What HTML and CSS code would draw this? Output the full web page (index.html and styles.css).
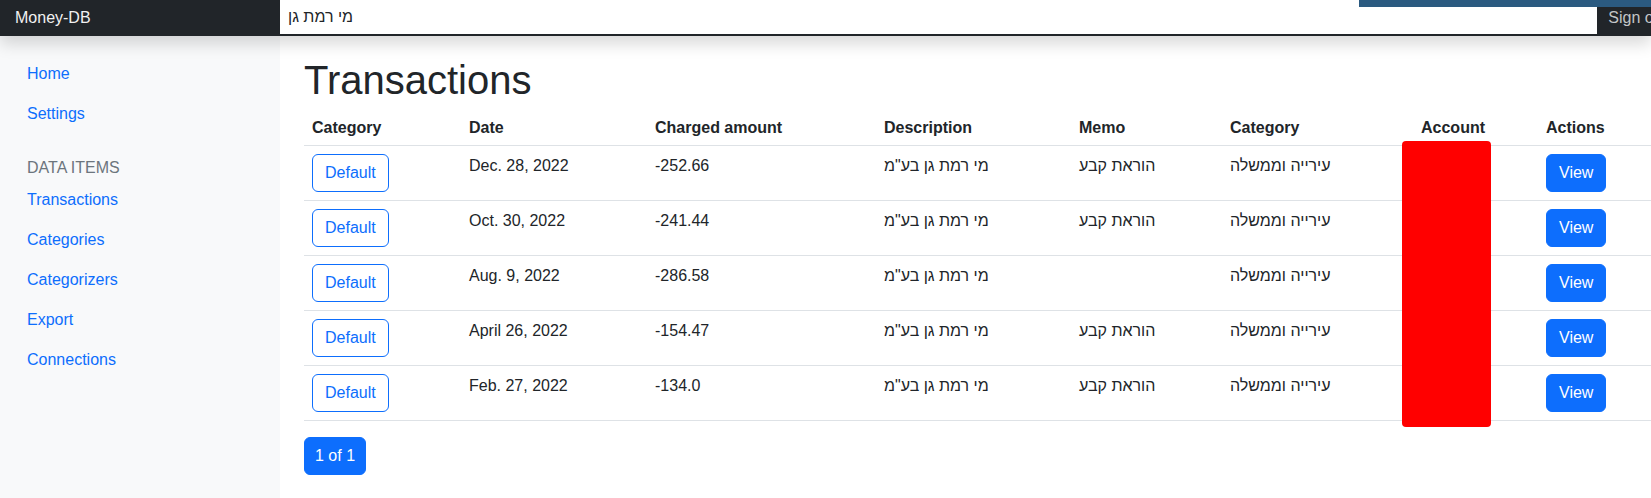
FILE: index.html
```html
<!DOCTYPE html>
<html lang="en">
<head>
<meta charset="utf-8">
<title>Money-DB · Transactions</title>
<link rel="stylesheet" href="styles.css">
</head>
<body>
<header class="topbar">
  <a class="brand" href="#">Money-DB</a>
  <div class="search"><span class="search-text">מי רמת גן</span></div>
  <a class="signout" href="#">Sign out</a>
  <div class="ribbon"></div>
</header>
<div class="layout">
  <nav class="sidebar">
    <a class="side-link" href="#">Home</a>
    <a class="side-link" href="#">Settings</a>
    <div class="side-heading">Data items</div>
    <a class="side-link" href="#">Transactions</a>
    <a class="side-link" href="#">Categories</a>
    <a class="side-link" href="#">Categorizers</a>
    <a class="side-link" href="#">Export</a>
    <a class="side-link" href="#">Connections</a>
  </nav>
  <main class="main">
    <h1 class="title">Transactions</h1>
    <table class="table">
      <colgroup>
        <col class="c-cat"><col class="c-date"><col class="c-amt"><col class="c-desc"><col class="c-memo"><col class="c-cat2"><col class="c-acct"><col class="c-act">
      </colgroup>
      <thead>
        <tr><th>Category</th><th>Date</th><th>Charged amount</th><th>Description</th><th>Memo</th><th>Category</th><th>Account</th><th>Actions</th></tr>
      </thead>
      <tbody>
        <tr><td><a class="btn btn-outline" href="#">Default</a></td><td>Dec. 28, 2022</td><td>-252.66</td><td>מי רמת גן בע"מ</td><td>הוראת קבע</td><td>עירייה וממשלה</td><td></td><td><a class="btn btn-primary" href="#">View</a></td></tr>
        <tr><td><a class="btn btn-outline" href="#">Default</a></td><td>Oct. 30, 2022</td><td>-241.44</td><td>מי רמת גן בע"מ</td><td>הוראת קבע</td><td>עירייה וממשלה</td><td></td><td><a class="btn btn-primary" href="#">View</a></td></tr>
        <tr><td><a class="btn btn-outline" href="#">Default</a></td><td>Aug. 9, 2022</td><td>-286.58</td><td>מי רמת גן בע"מ</td><td></td><td>עירייה וממשלה</td><td></td><td><a class="btn btn-primary" href="#">View</a></td></tr>
        <tr><td><a class="btn btn-outline" href="#">Default</a></td><td>April 26, 2022</td><td>-154.47</td><td>מי רמת גן בע"מ</td><td>הוראת קבע</td><td>עירייה וממשלה</td><td></td><td><a class="btn btn-primary" href="#">View</a></td></tr>
        <tr><td><a class="btn btn-outline" href="#">Default</a></td><td>Feb. 27, 2022</td><td>-134.0</td><td>מי רמת גן בע"מ</td><td>הוראת קבע</td><td>עירייה וממשלה</td><td></td><td><a class="btn btn-primary" href="#">View</a></td></tr>
      </tbody>
    </table>
    <div class="pager"><a class="btn btn-primary btn-page" href="#">1 of 1</a></div>
    <div class="redact"></div>
  </main>
</div>
</body>
</html>
```

FILE: styles.css
```css
* { box-sizing: border-box; }
html, body { margin: 0; height: 100%; }
body {
  font-family: "Liberation Sans", Arial, sans-serif;
  font-size: 16px;
  line-height: 24px;
  color: #212529;
  background: #fff;
  overflow: hidden;
}
a { text-decoration: none; }

.topbar {
  position: relative;
  z-index: 2;
  display: flex;
  height: 36px;
  background: #212529;
  box-shadow: 0 8px 16px rgba(0, 0, 0, .15);
}
.brand {
  flex: 0 0 280px;
  padding: 6px 15px;
  color: #f1f1f1;
}
.search {
  flex: 1 1 auto;
  height: 34px;
  padding: 5px 8px;
  background: #fff;
  color: #212529;
}
.signout {
  flex: 0 0 auto;
  margin-right: -32px;
  padding: 6px 16px 6px 11px;
  color: #c3c5c7;
  white-space: nowrap;
}
.ribbon {
  position: absolute;
  top: 0;
  right: 0;
  width: 292px;
  height: 7px;
  background: #2b5a80;
}

.layout {
  display: grid;
  grid-template-columns: 280px 1fr;
  height: calc(100% - 36px);
}
.sidebar {
  background: #f8f9fa;
  padding-top: 18px;
}
.side-link {
  display: block;
  padding: 8px 16px 8px 27px;
  color: #0d6efd;
}
.side-heading {
  margin-top: 22px;
  padding: 0 27px;
  color: #6c757d;
  text-transform: uppercase;
}

.main {
  position: relative;
  padding: 20px 0 0 24px;
}
.title {
  margin: 0;
  font-size: 40px;
  line-height: 48px;
  font-weight: 400;
}
.table {
  width: 100%;
  table-layout: fixed;
  border-collapse: collapse;
  margin-bottom: 16px;
}
.c-cat { width: 157px; }
.c-date { width: 186px; }
.c-amt { width: 229px; }
.c-desc { width: 195px; }
.c-memo { width: 151px; }
.c-cat2 { width: 191px; }
.c-acct { width: 125px; }
.c-act { width: 113px; }
.table th {
  text-align: left;
  font-weight: 700;
  padding: 12px 8px 5px;
  border-bottom: 1px solid #dee2e6;
  vertical-align: bottom;
}
.table td {
  padding: 8px;
  vertical-align: top;
  border-bottom: 1px solid #dee2e6;
}

.btn {
  display: inline-block;
  padding: 6px 12px;
  border: 1px solid #0d6efd;
  border-radius: 6px;
  line-height: 24px;
  font-size: 16px;
}
.btn-outline { color: #0d6efd; background: #fff; }
.btn-primary { color: #fff; background: #0d6efd; }
.btn-page { padding: 6px 10px; }

.redact {
  position: absolute;
  left: 1122px;
  top: 105px;
  width: 89px;
  height: 286px;
  background: #ff0000;
  border-radius: 4px;
}
```
